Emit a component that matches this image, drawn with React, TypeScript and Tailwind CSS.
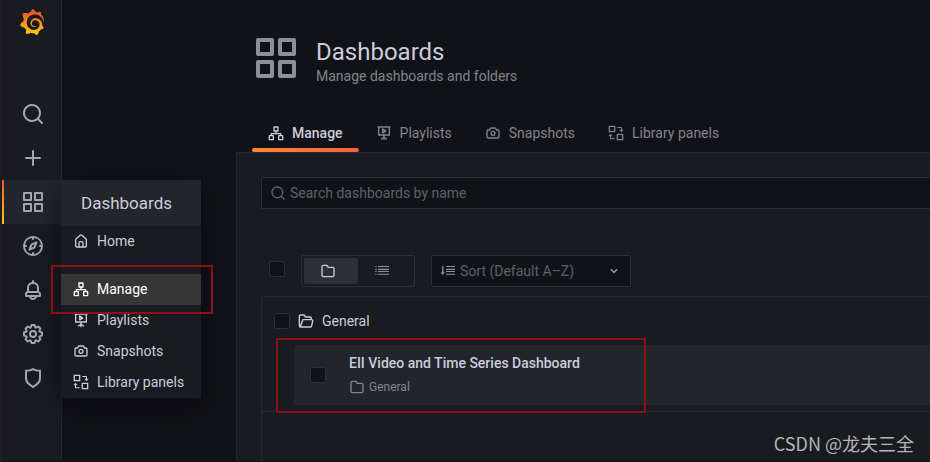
import type { ReactNode } from "react";
import { SiGrafana } from "react-icons/si";

const paths = {
  search:
    "M21.71,20.29,18,16.61A9,9,0,1,0,16.61,18l3.68,3.68a1,1,0,0,0,1.42,0A1,1,0,0,0,21.71,20.29ZM11,18a7,7,0,1,1,7-7A7,7,0,0,1,11,18Z",
  plus: "M19,11H13V5a1,1,0,0,0-2,0v6H5a1,1,0,0,0,0,2h6v6a1,1,0,0,0,2,0V13h6a1,1,0,0,0,0-2Z",
  apps: "M10,13H3a1,1,0,0,0-1,1v7a1,1,0,0,0,1,1h7a1,1,0,0,0,1-1V14A1,1,0,0,0,10,13ZM9,20H4V15H9ZM21,2H14a1,1,0,0,0-1,1v7a1,1,0,0,0,1,1h7a1,1,0,0,0,1-1V3A1,1,0,0,0,21,2ZM20,9H15V4h5Zm1,4H14a1,1,0,0,0-1,1v7a1,1,0,0,0,1,1h7a1,1,0,0,0,1-1V14A1,1,0,0,0,21,13Zm-1,7H15V15h5ZM10,2H3A1,1,0,0,0,2,3v7a1,1,0,0,0,1,1h7a1,1,0,0,0,1-1V3A1,1,0,0,0,10,2ZM9,9H4V4H9Z",
  compass:
    "M12,2A10,10,0,1,0,22,12,10,10,0,0,0,12,2Zm1,17.93V19a1,1,0,0,0-2,0v.93A8,8,0,0,1,4.07,13H5a1,1,0,0,0,0-2H4.07A8,8,0,0,1,11,4.07V5a1,1,0,0,0,2,0V4.07A8,8,0,0,1,19.93,11H19a1,1,0,0,0,0,2h.93A8,8,0,0,1,13,19.93ZM15.14,7.55l-5,2.12a1,1,0,0,0-.52.52l-2.12,5a1,1,0,0,0,.21,1.1,1,1,0,0,0,.7.3.93.93,0,0,0,.4-.09l5-2.12a1,1,0,0,0,.52-.52l2.12-5a1,1,0,0,0-1.31-1.31Zm-2.49,5.1-2.28,1,1-2.28,2.28-1Z",
  bell: "M18,13.18V10a6,6,0,0,0-5-5.91V3a1,1,0,0,0-2,0V4.09A6,6,0,0,0,6,10v3.18A3,3,0,0,0,4,16v2a1,1,0,0,0,1,1H8.14a4,4,0,0,0,7.72,0H19a1,1,0,0,0,1-1V16A3,3,0,0,0,18,13.18ZM8,10a4,4,0,0,1,8,0v3H8Zm4,10a2,2,0,0,1-1.72-1h3.44A2,2,0,0,1,12,20Zm6-3H6V16a1,1,0,0,1,1-1H17a1,1,0,0,1,1,1Z",
  cog: "M21.32,9.55l-1.89-.63.89-1.78A1,1,0,0,0,20.13,6L18,3.87a1,1,0,0,0-1.15-.19l-1.78.89-.63-1.89A1,1,0,0,0,13.5,2h-3a1,1,0,0,0-.95.68L8.92,4.57,7.14,3.68A1,1,0,0,0,6,3.87L3.87,6a1,1,0,0,0-.19,1.15l.89,1.78-1.89.63A1,1,0,0,0,2,10.5v3a1,1,0,0,0,.68.95l1.89.63-.89,1.78A1,1,0,0,0,3.87,18L6,20.13a1,1,0,0,0,1.15.19l1.78-.89.63,1.89a1,1,0,0,0,.95.68h3a1,1,0,0,0,.95-.68l.63-1.89,1.78.89A1,1,0,0,0,18,20.13L20.13,18a1,1,0,0,0,.19-1.15l-.89-1.78,1.89-.63A1,1,0,0,0,22,13.5v-3A1,1,0,0,0,21.32,9.55ZM20,12.78l-1.2.4A2,2,0,0,0,17.64,16l.57,1.14-1.1,1.1L16,17.64a2,2,0,0,0-2.79,1.16l-.4,1.2H11.22l-.4-1.2A2,2,0,0,0,8,17.64l-1.14.57-1.1-1.1L6.36,16A2,2,0,0,0,5.2,13.18L4,12.78V11.22l1.2-.4A2,2,0,0,0,6.36,8L5.79,6.89l1.1-1.1L8,6.36A2,2,0,0,0,10.82,5.2l.4-1.2h1.56l.4,1.2A2,2,0,0,0,16,6.36l1.14-.57,1.1,1.1L17.64,8a2,2,0,0,0,1.16,2.79l1.2.4ZM12,8a4,4,0,1,0,4,4A4,4,0,0,0,12,8Zm0,6a2,2,0,1,1,2-2A2,2,0,0,1,12,14Z",
  shield:
    "M19.63,3.65a1,1,0,0,0-.84-.2,8,8,0,0,1-6.22-1.27,1,1,0,0,0-1.14,0A8,8,0,0,1,5.21,3.45a1,1,0,0,0-.84.2A1,1,0,0,0,4,4.43v7.45a9,9,0,0,0,3.77,7.33l3.65,2.6a1,1,0,0,0,1.16,0l3.65-2.6A9,9,0,0,0,20,11.88V4.43A1,1,0,0,0,19.63,3.65ZM18,11.88a7,7,0,0,1-2.93,5.7L12,19.77,8.93,17.58A7,7,0,0,1,6,11.88V5.58a10,10,0,0,0,6-1.39,10,10,0,0,0,6,1.39Z",
  home: "M20,8h0L14,2.74a3,3,0,0,0-4,0L4,8a3,3,0,0,0-1,2.26V19a3,3,0,0,0,3,3H18a3,3,0,0,0,3-3V10.25A3,3,0,0,0,20,8ZM14,20H10V15a1,1,0,0,1,1-1h2a1,1,0,0,1,1,1Zm5-1a1,1,0,0,1-1,1H16V15a3,3,0,0,0-3-3H11a3,3,0,0,0-3,3v5H6a1,1,0,0,1-1-1V10.25a1,1,0,0,1,.34-.75l6-5.25a1,1,0,0,1,1.32,0l6,5.25a1,1,0,0,1,.34.75Z",
  sitemap:
    "M22,15H20V13a1,1,0,0,0-1-1H13V10h2a1,1,0,0,0,1-1V3a1,1,0,0,0-1-1H9A1,1,0,0,0,8,3V9a1,1,0,0,0,1,1h2v2H5a1,1,0,0,0-1,1v2H2a1,1,0,0,0-1,1v6a1,1,0,0,0,1,1H8a1,1,0,0,0,1-1V16a1,1,0,0,0-1-1H6V14H18v1H16a1,1,0,0,0-1,1v6a1,1,0,0,0,1,1h6a1,1,0,0,0,1-1V16A1,1,0,0,0,22,15ZM7,17v4H3V17ZM10,8V4h4V8ZM21,21H17V17h4Z",
  playlist:
    "M21,2H3A1,1,0,0,0,3,4V15a1,1,0,0,0,1,1h7v2.1L7.5,20.2a1,1,0,0,0,1,1.7L11,20.4V22a1,1,0,0,0,2,0V20.4l2.5,1.5a1,1,0,0,0,1-1.7L13,18.1V16h7a1,1,0,0,0,1-1V4a1,1,0,0,0,0-2ZM19,14H5V4H19ZM9.8,12.7a1,1,0,0,0,1,0L14.9,10a1.2,1.2,0,0,0,0-2L10.8,5.3A1,1,0,0,0,9,6.3v5.4A1,1,0,0,0,9.8,12.7ZM11,8.2,12.2,9,11,9.8Z",
  camera:
    "M19,6.5H17.72l-.32-1a3,3,0,0,0-2.84-2H9.44A3,3,0,0,0,6.6,5.55l-.32,1H5a3,3,0,0,0-3,3v8a3,3,0,0,0,3,3H19a3,3,0,0,0,3-3v-8A3,3,0,0,0,19,6.5Zm1,11a1,1,0,0,1-1,1H5a1,1,0,0,1-1-1v-8a1,1,0,0,1,1-1H7a1,1,0,0,0,1-.68l.54-1.64a1,1,0,0,1,.95-.68h5.12a1,1,0,0,1,.95.68l.54,1.64A1,1,0,0,0,17,8.5h2a1,1,0,0,1,1,1Zm-8-9a4,4,0,1,0,4,4A4,4,0,0,0,12,8.5Zm0,6a2,2,0,1,1,2-2A2,2,0,0,1,12,14.5Z",
  library:
    "M2,1H10a1,1,0,0,1,1,1V10a1,1,0,0,1-1,1H2a1,1,0,0,1-1-1V2A1,1,0,0,1,2,1ZM3,3V9H9V3ZM14,13h8a1,1,0,0,1,1,1v8a1,1,0,0,1-1,1H14a1,1,0,0,1-1-1V14A1,1,0,0,1,14,13Zm1,2v6h6V15ZM14,3h6a1,1,0,0,1,1,1V7h2.5L20.2,11,17,7h2.5V4.5H14ZM10,21.5H4a1,1,0,0,1-1-1V17H.5L3.8,13,7,17H4.5v3H10Z",
  folder:
    "M19,5.5H12.72l-.32-1a3,3,0,0,0-2.84-2H5a3,3,0,0,0-3,3v13a3,3,0,0,0,3,3H19a3,3,0,0,0,3-3V8.5A3,3,0,0,0,19,5.5Zm1,13a1,1,0,0,1-1,1H5a1,1,0,0,1-1-1V5.5a1,1,0,0,1,1-1H9.56a1,1,0,0,1,.95.68l.54,1.64A1,1,0,0,0,12,7.5h7a1,1,0,0,1,1,1Z",
  folderOpen:
    "M22.3,9.6A2,2,0,0,0,21,9.2V8a3,3,0,0,0-3-3H11.7l-.3-1A3,3,0,0,0,8.6,2H4A3,3,0,0,0,1,5V19a3,3,0,0,0,3,3H18.4a3,3,0,0,0,2.9-2.3l1.9-8A2,2,0,0,0,22.3,9.6ZM3,5A1,1,0,0,1,4,4H8.6a1,1,0,0,1,.9.7L10,6.3a1,1,0,0,0,1,.7h7a1,1,0,0,1,1,1V9H8A2,2,0,0,0,6,10.6L3,18.5ZM19.4,19.2a1,1,0,0,1-1,.8H5L8,11H21.2Z",
  list: "M2,4.5H4V6H2ZM6,4.5H22.5V6H6ZM2,8.5H4V10.5H2ZM6,8.5H22.5V10.5H6ZM2,12H4V13.5H2ZM6,12H22.5V13.5H6ZM2,16H4V17.5H2ZM6,16H22.5V17.5H6Z",
  sort: "M3.2,4.5H5.2V14H7.5L4.2,18,1,14H3.2ZM9,4.5H22.5V6H9ZM9,8.5H22.5V10.5H9ZM9,12H22.5V13.5H9ZM9,16H22.5V17.5H9Z",
  angleDown:
    "M17,9.17a1,1,0,0,0-1.41,0L12,12.71,8.46,9.17a1,1,0,0,0-1.41,0,1,1,0,0,0,0,1.42l4.24,4.24a1,1,0,0,0,1.42,0L17,10.59A1,1,0,0,0,17,9.17Z",
};

type IconName = keyof typeof paths;

function Icon({ name, className = "size-4" }: { name: IconName; className?: string }) {
  return (
    <svg viewBox="0 0 24 24" fill="currentColor" aria-hidden="true" className={`shrink-0 ${className}`}>
      <path d={paths[name]} />
    </svg>
  );
}

function Logo() {
  return (
    <a href="#home" aria-label="Grafana" className="flex h-7 items-center justify-center">
      <svg width="0" height="0" className="absolute" aria-hidden="true">
        <defs>
          <linearGradient id="flame" x1="0" y1="1" x2="0" y2="0">
            <stop offset="0" stopColor="#fdcb0a" />
            <stop offset="0.4" stopColor="#f99b1c" />
            <stop offset="0.85" stopColor="#f05a28" />
          </linearGradient>
        </defs>
      </svg>
      <SiGrafana fill="url(#flame)" className="size-[26px]" />
    </a>
  );
}

function Checkbox({ label, className = "" }: { label: string; className?: string }) {
  return (
    <input
      type="checkbox"
      aria-label={label}
      className={`size-4 shrink-0 appearance-none rounded-xs border border-[#2d2f34] bg-[#111217] ${className}`}
    />
  );
}

const sideItems: { icon: IconName; label: string }[] = [
  { icon: "search", label: "Search" },
  { icon: "plus", label: "Create" },
  { icon: "apps", label: "Dashboards" },
  { icon: "compass", label: "Explore" },
  { icon: "bell", label: "Alerting" },
  { icon: "cog", label: "Configuration" },
  { icon: "shield", label: "Server admin" },
];

const pages: { icon: IconName; label: string }[] = [
  { icon: "sitemap", label: "Manage" },
  { icon: "playlist", label: "Playlists" },
  { icon: "camera", label: "Snapshots" },
  { icon: "library", label: "Library panels" },
];

function MenuLink({ icon, label, active = false }: { icon: IconName; label: string; active?: boolean }) {
  return (
    <li>
      <a
        href="#menu"
        className={`flex h-[31px] items-center gap-2 pb-0.5 pl-3 whitespace-nowrap ${active ? "bg-[#353535] text-white" : ""}`}
      >
        <Icon name={icon} />
        {label}
      </a>
    </li>
  );
}

function DashboardsMenu() {
  return (
    <div className="absolute top-0 left-full z-10 w-[140px] bg-[#181b1f] text-sm text-[#ccccdc] shadow-[0_8px_24px_rgb(1,4,9,0.5)]">
      <a href="#dashboards" className="flex h-[46px] items-center bg-[#22252b] px-5 text-[17px]">
        Dashboards
      </a>
      <ul>
        <MenuLink icon="home" label="Home" />
        <li role="separator" className="h-[17px]" />
        {pages.map((page) => (
          <MenuLink key={page.label} {...page} active={page.label === "Manage"} />
        ))}
      </ul>
      <Highlight className="top-[85px] -left-[10px] h-[49px] w-[162px]" />
    </div>
  );
}

function Highlight({ className }: { className: string }) {
  return <div className={`pointer-events-none absolute border-2 border-[#8e1014] ${className}`} />;
}

function Sidebar() {
  return (
    <nav className="flex w-[61px] shrink-0 flex-col border-r border-[#25272c] bg-[#181b1f] pt-2 pl-px">
      <Logo />
      <ul className="mt-14 text-[#9fa7b3]">
        {sideItems.map(({ icon, label }) => {
          const active = label === "Dashboards";
          return (
            <li key={label} className={`relative ${active ? "bg-[#22252b]" : ""}`}>
              <a href="#section" aria-label={label} className="flex h-11 items-center justify-center pl-[3px]">
                <Icon name={icon} className="size-6" />
              </a>
              {active && (
                <>
                  <span className="absolute inset-y-0 left-0 w-0.5 bg-linear-to-b from-[#f05a28] to-[#fbca0a]" />
                  <DashboardsMenu />
                </>
              )}
            </li>
          );
        })}
      </ul>
    </nav>
  );
}

function PageHeader() {
  return (
    <header className="pl-4">
      <div className="flex items-center pt-[30px]">
        <Icon name="apps" className="size-12 text-[#8e8e99]" />
        <div className="pt-2 pl-4">
          <h1 className="text-2xl leading-7 text-[#ccccdc]">Dashboards</h1>
          <p className="text-sm leading-5 text-[#83848d]">Manage dashboards and folders</p>
        </div>
      </div>
      <nav className="mt-7 flex gap-px text-sm">
        {pages.map(({ icon, label }) => (
          <a
            key={label}
            href="#tab"
            className={`relative flex h-[38px] items-center gap-2 px-4 whitespace-nowrap ${
              label === "Manage" ? "font-medium text-[#ccccdc]" : "text-[#83848d]"
            }`}
          >
            <Icon name={icon} />
            {label}
            {label === "Manage" && (
              <span className="absolute inset-x-0 bottom-0 h-1 rounded-xs bg-linear-to-r from-[#ff8833] to-[#f55f3e]" />
            )}
          </a>
        ))}
      </nav>
    </header>
  );
}

function Field({ children, className }: { children: ReactNode; className: string }) {
  return (
    <div className={`flex h-8 items-center border-[#2d2f34] bg-[#111217] text-sm text-[#5f6067] ${className}`}>
      {children}
    </div>
  );
}

function Toolbar() {
  return (
    <div className="mt-[46px] flex items-start pl-2">
      <Checkbox label="Select all" className="mt-1.5" />
      <div className="ml-4 flex h-8 w-[114px] rounded-xs border border-[#2d2f34] p-0.5 text-[#8e8e99]">
        <button
          aria-label="View by folders"
          className="flex flex-1 items-center justify-center rounded-xs bg-[#2d2f34] pr-1.5 text-[#ccccdc]"
        >
          <Icon name="folder" />
        </button>
        <button aria-label="View as list" className="flex flex-1 items-center justify-center pr-1.5">
          <Icon name="list" />
        </button>
      </div>
      <Field className="relative ml-4 w-[200px] rounded-xs border">
        <Icon name="sort" className="absolute left-2 size-4 text-[#8e8e99]" />
        <select aria-label="Sort" className="h-full w-full appearance-none pl-7 outline-none">
          <option>Sort (Default A–Z)</option>
        </select>
        <Icon name="angleDown" className="pointer-events-none absolute right-2 size-4 text-[#9fa0a8]" />
      </Field>
    </div>
  );
}

function Results() {
  return (
    <section className="mt-[9px] flex-1 rounded-tl-xs border-t border-l border-[#25272c]">
      <div className="border-b border-[#2d2f34] pb-1.5">
        <div className="flex h-12 items-center pl-3 text-sm text-[#ccccdc]">
          <Checkbox label="Select General" />
          <Icon name="folderOpen" className="ml-2 size-4" />
          <h2 className="ml-2">General</h2>
        </div>
        <article className="relative ml-8 flex h-[60px] items-center rounded-l-xs bg-[#22252b] pl-4">
          <Checkbox label="Select EII Video and Time Series Dashboard" />
          <div className="ml-[23px]">
            <a href="#dashboard" className="block text-sm leading-6 font-medium text-[#ccccdc]">
              EII Video and Time Series Dashboard
            </a>
            <p className="flex items-center gap-1 text-xs leading-6 text-[#83848d]">
              <Icon name="folder" />
              General
            </p>
          </div>
          <Highlight className="-top-[7px] -left-[18px] h-[75px] w-[370px]" />
        </article>
      </div>
    </section>
  );
}

export default function App() {
  return (
    <div className="relative flex min-h-screen overflow-hidden border-b border-l border-b-[#1d1118] border-l-[#2c1722] bg-[#111217] font-[Roboto,sans-serif]">
      <Sidebar />
      <div className="flex min-w-0 flex-1 flex-col pl-[174px]">
        <PageHeader />
        <main className="flex flex-1 flex-col border-t border-l border-[#25272c] bg-[#181b1f] pt-6 pl-6">
          <Field className="gap-1 rounded-l-xs border-y border-l pl-2">
            <Icon name="search" />
            <input
              type="search"
              aria-label="Search dashboards by name"
              placeholder="Search dashboards by name"
              className="h-full flex-1 outline-none placeholder:text-[#5f6067]"
            />
          </Field>
          <Toolbar />
          <Results />
        </main>
      </div>
      <div className="absolute right-4 bottom-1.5 font-['Noto_Sans_CJK_SC',sans-serif] text-lg leading-6 text-[#b4b5b7]">
        CSDN @龙夫三全
      </div>
    </div>
  );
}
